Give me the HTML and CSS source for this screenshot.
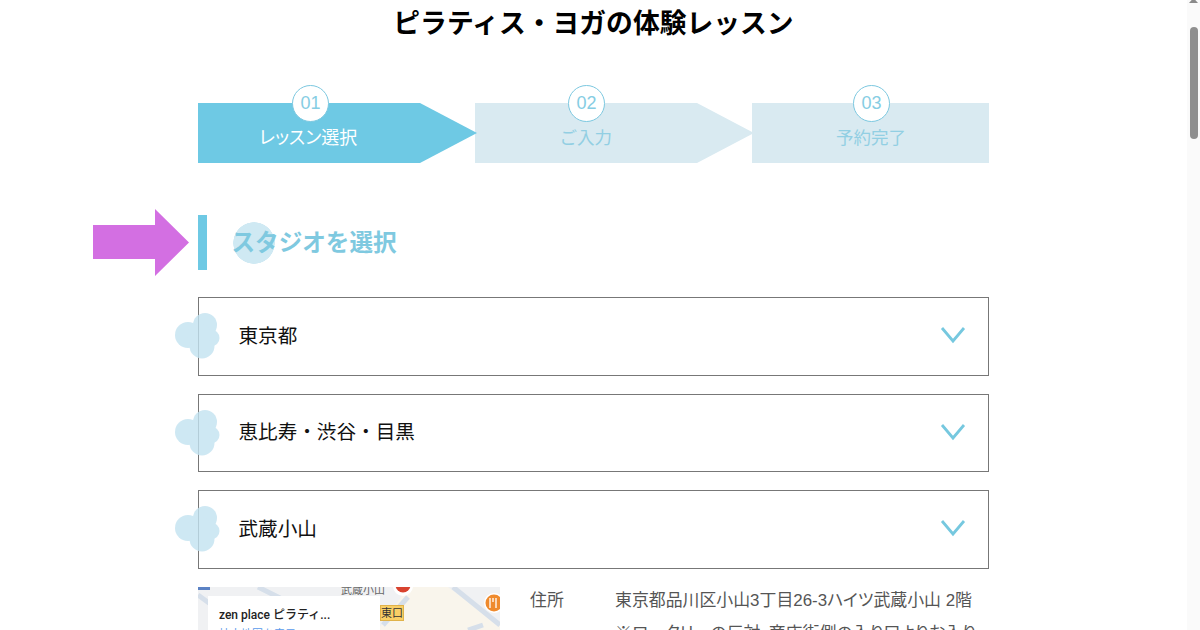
FILE: index.html
```html
<!DOCTYPE html>
<html lang="ja">
<head>
  <meta charset="UTF-8" />
  <title>ピラティス・ヨガの体験レッスン</title>
  <link rel="stylesheet" href="styles.css">
</head>
<body>
  <div class="page">
    <main class="content">
      <h1>ピラティス・ヨガの体験レッスン</h1>

      <ol class="steps">
        <li class="step step-first active"><span class="step-num">01</span><span class="step-label">レッスン選択</span></li>
        <li class="step step-second"><span class="step-num">02</span><span class="step-label">ご入力</span></li>
        <li class="step step-last"><span class="step-num">03</span><span class="step-label">予約完了</span></li>
      </ol>

      <div class="section-title">
        <svg class="pointer" width="96" height="67" viewBox="0 0 96 67"><path d="M0 16H62V0L96 33.500 62 67V50H0Z" fill="#d36fe2"/></svg>
        <h2><span>スタジオを選択</span></h2>
      </div>

      <section class="area">
        <svg class="blob" width="46" height="46" viewBox="0 0 46 46"><g fill="#c3e3f1"><circle cx="30" cy="12" r="12"/><circle cx="13" cy="22" r="13"/><circle cx="27" cy="33" r="12.500"/><circle cx="36" cy="25" r="8.500"/><circle cx="24" cy="22" r="12"/></g></svg>
        <span class="area-name">東京都</span>
        <svg class="chevron" width="26" height="18" viewBox="0 0 26 18"><path d="M2 2L13 15L24 2" fill="none" stroke="#76c8df" stroke-width="2.800"/></svg>
      </section>
      <section class="area">
        <svg class="blob" width="46" height="46" viewBox="0 0 46 46"><g fill="#c3e3f1"><circle cx="30" cy="12" r="12"/><circle cx="13" cy="22" r="13"/><circle cx="27" cy="33" r="12.500"/><circle cx="36" cy="25" r="8.500"/><circle cx="24" cy="22" r="12"/></g></svg>
        <span class="area-name">恵比寿・渋谷・目黒</span>
        <svg class="chevron" width="26" height="18" viewBox="0 0 26 18"><path d="M2 2L13 15L24 2" fill="none" stroke="#76c8df" stroke-width="2.800"/></svg>
      </section>
      <section class="area">
        <svg class="blob" width="46" height="46" viewBox="0 0 46 46"><g fill="#c3e3f1"><circle cx="30" cy="12" r="12"/><circle cx="13" cy="22" r="13"/><circle cx="27" cy="33" r="12.500"/><circle cx="36" cy="25" r="8.500"/><circle cx="24" cy="22" r="12"/></g></svg>
        <span class="area-name">武蔵小山</span>
        <svg class="chevron" width="26" height="18" viewBox="0 0 26 18"><path d="M2 2L13 15L24 2" fill="none" stroke="#76c8df" stroke-width="2.800"/></svg>
      </section>

      <div class="studio">
        <div class="map">
          <svg class="map-bg" width="302" height="43" viewBox="0 0 302 43">
            <rect width="302" height="43" fill="#f0f1f3"/>
            <path d="M210 0H250L302 38V43H180Z" fill="#f9f5ec"/>
            <path d="M0 8L30 30M60 0L100 20M255 0L302 38M285 38L270 43M210 10L185 38" stroke="#d6dfea" stroke-width="5" fill="none"/>
            <rect x="0" y="0" width="12" height="3" fill="#5b82c4"/>
            <circle cx="205" cy="-1" r="10" fill="#fff"/>
            <circle cx="205" cy="-2" r="7.500" fill="#d8432f"/>
            <circle cx="296" cy="16" r="10" fill="#fff"/>
            <circle cx="296" cy="16" r="8.500" fill="#ef8a2d"/>
            <path d="M292 11V21M295 11V15M298 11V21" stroke="#fff" stroke-width="1.300"/>
          </svg>
          <span class="map-station">武蔵小山</span>
          <div class="map-card">
            <p class="map-name">zen place ピラティ...</p>
            <p class="map-link">拡大地図を表示</p>
          </div>
          <span class="map-exit">東口</span>
        </div>
        <dl class="info">
          <dt>住所</dt>
          <dd>東京都品川区小山3丁目26-3ハイツ武蔵小山 2階<br>※ロータリーの反対、商店街側の入り口よりお入り</dd>
        </dl>
      </div>
    </main>
    <div class="scrollbar">
      <svg width="9" height="5" viewBox="0 0 9 5"><path d="M4.500 0L9 5H0Z" fill="#8a8a8a"/></svg>
      <div class="thumb"></div>
    </div>
  </div>
</body>
</html>
```

FILE: styles.css
```css
html, body {
  margin: 0;
  height: 630px;
  overflow: hidden;
  background: white;
}
body {
  font-family: "Liberation Sans", "Noto Sans CJK JP", sans-serif;
}
.page {
  display: flex;
  height: 630px;
}
.content {
  flex: 1;
  padding: 0 198px;
  min-width: 0;
  overflow: hidden;
}
h1 {
  margin: 0;
  padding-top: 5px;
  height: 37px;
  line-height: 38px;
  font-size: 26.800px;
  font-weight: bold;
  text-align: center;
  color: #000;
  white-space: nowrap;
}
.steps {
  display: flex;
  list-style: none;
  margin: 61px 0 0;
  padding: 0;
  height: 60px;
}
.step {
  position: relative;
  height: 60px;
  box-sizing: border-box;
  background: #d9eaf1;
  color: #92cfe3;
  display: flex;
  align-items: flex-end;
  padding-bottom: 13px;
}
.step-first {
  width: 279px;
  margin-right: -2px;
  color: white;
  z-index: 1;
}
.step-second {
  width: 279px;
  margin-right: -2px;
  z-index: 0;
}
.step-first, .step-second {
  background: none;
}
.step-first::before, .step-second::before {
  content: "";
  position: absolute;
  inset: 0;
  clip-path: polygon(0 0, 222px 0, 100% 50%, 222px 100%, 0 100%);
}
.step-first::before {
  background: #6ec9e4;
}
.step-second::before {
  background: #d9eaf1;
}
.step-last {
  flex: 1;
}
.step-num {
  position: absolute;
  top: -18px;
  width: 35px;
  height: 35px;
  border: 1px solid #7cc8e0;
  border-radius: 50%;
  background: white;
  color: #86cde3;
  font-size: 18px;
  line-height: 35px;
  text-align: center;
  z-index: 1;
}
.step-first .step-num {
  left: 94px;
}
.step-second .step-num {
  left: 93px;
}
.step-last .step-num {
  left: 101px;
}
.step-label {
  position: relative;
  font-size: 17.500px;
  line-height: 24px;
  white-space: nowrap;
}
.step-first .step-label {
  margin-left: 61px;
  font-size: 18px;
  font-feature-settings: "palt";
}
.step-second .step-label {
  margin-left: 84.500px;
}
.step-last .step-label {
  margin-left: 84px;
}
.section-title {
  position: relative;
  margin-top: 52px;
  height: 55px;
  border-left: 9px solid #6ec9e4;
  display: flex;
  align-items: center;
}
.pointer {
  position: absolute;
  left: -114px;
  top: -6px;
}
h2 {
  margin: 0 0 0 24.500px;
  font-size: 23.600px;
  font-weight: bold;
  color: #7fc9e0;
}
h2 span {
  display: block;
  background: radial-gradient(circle 21px at 22px 50%, #cfe9f3 20.500px, transparent 21px);
  line-height: 42px;
  white-space: nowrap;
}
.area {
  position: relative;
  box-sizing: border-box;
  height: 78.500px;
  margin-bottom: 18px;
  border: 1px solid #777;
  display: flex;
  align-items: center;
  justify-content: space-between;
  padding: 0 22px 2px 39.500px;
}
.section-title + .area {
  margin-top: 27px;
}
.blob {
  position: absolute;
  left: -24px;
  top: 15px;
  opacity: 0.8;
}
.area-name {
  position: relative;
  top: -1px;
  font-size: 19.600px;
  color: #111;
}
.studio {
  display: flex;
  gap: 30px;
}
.map {
  position: relative;
  width: 302px;
  height: 43px;
  flex-shrink: 0;
  overflow: hidden;
}
.map-bg {
  display: block;
}
.map-station {
  position: absolute;
  left: 143px;
  top: -6px;
  font-size: 11px;
  color: #666;
}
.map-card {
  position: absolute;
  left: 10px;
  top: 9px;
  width: 172px;
  height: 50px;
  background: white;
  box-sizing: border-box;
  padding: 10px 11px;
}
.map-card p {
  margin: 0;
  white-space: nowrap;
}
.map-name {
  font-family: Roboto, "Noto Sans CJK JP", sans-serif;
  font-size: 12px;
  line-height: 18px;
  font-weight: 500;
  color: #222;
}
.map-link {
  font-size: 11px;
  line-height: 16px;
  padding-top: 2px;
  color: #5a9bec;
}
.map-exit {
  position: absolute;
  left: 182px;
  top: 18px;
  width: 24px;
  height: 16px;
  background: #f9cf66;
  border: 1px solid #e0b24a;
  box-sizing: border-box;
  font-size: 11px;
  line-height: 14px;
  text-align: center;
  color: #333;
}
.info {
  display: flex;
  margin: -3px 0 0;
  font-size: 16.900px;
  line-height: 33px;
  color: #555;
  white-space: nowrap;
}
.info dt {
  width: 85px;
  flex-shrink: 0;
}
.info dd {
  margin: 0;
  font-feature-settings: "palt";
}
.scrollbar {
  width: 13px;
  height: 630px;
  background: #fafafa;
  display: flex;
  flex-direction: column;
  align-items: center;
}
.scrollbar svg {
  display: block;
  flex-shrink: 0;
  margin-top: -2px;
}
.thumb {
  margin-top: 24px;
  width: 8px;
  height: 112px;
  border-radius: 4px;
  background: #8f8f8f;
}
```
